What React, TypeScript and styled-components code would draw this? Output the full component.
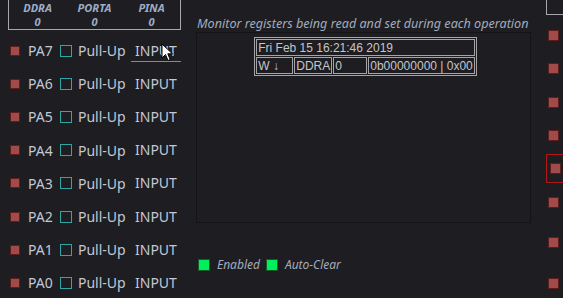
import React from 'react';
import styled, { createGlobalStyle } from 'styled-components';

const GlobalStyle = createGlobalStyle`
  html, body {
    margin: 0;
    padding: 0;
    background: #1d1d22;
    overflow: hidden;
  }
  body {
    font-family: 'Noto Sans', 'DejaVu Sans', sans-serif;
  }
`;

const pins = ['PA7', 'PA6', 'PA5', 'PA4', 'PA3', 'PA2', 'PA1', 'PA0'];
const rightPins = [
  { top: 30, selected: false },
  { top: 63, selected: false },
  { top: 97, selected: false },
  { top: 130, selected: false },
  { top: 163, selected: true },
  { top: 197, selected: false },
  { top: 237, selected: false },
  { top: 278, selected: false },
];

const App = () => {
  return (
    <Page>
      <GlobalStyle />
      <Left>
        <RegisterBox>
          {['DDRA', 'PORTA', 'PINA'].map((name) => (
            <RegisterCell key={name}>
              <span>{name}</span>
              <span>0</span>
            </RegisterCell>
          ))}
        </RegisterBox>
        <PinList>
          {pins.map((pin, i) => (
            <PinRow key={pin}>
              <Led />
              <PinName>{pin}</PinName>
              <Check />
              <PullUp>Pull-Up</PullUp>
              <Mode $focused={i === 0}>INPUT</Mode>
              {i === 0 && (
                <Cursor viewBox="0 0 12 19" width="12" height="19">
                  <path
                    d="M1 1 L1 15 L4.5 11.5 L7 17.5 L9.2 16.6 L6.8 10.8 L11.5 10.8 Z"
                    fill="#ffffff"
                    stroke="#000000"
                    strokeWidth="1"
                    strokeLinejoin="round"
                  />
                </Cursor>
              )}
            </PinRow>
          ))}
        </PinList>
      </Left>
      <Middle>
        <Caption>Monitor registers being read and set during each operation</Caption>
        <Monitor>
          <Log>
            <tbody>
              <tr>
                <td colSpan={4}>Fri Feb 15 16:21:46 2019</td>
              </tr>
              <tr>
                <LogCell $w={37}>W ↓</LogCell>
                <LogCell $w={37}>DDRA</LogCell>
                <LogCell $w={34}>0</LogCell>
                <LogCell>0b00000000 | 0x00</LogCell>
              </tr>
            </tbody>
          </Log>
        </Monitor>
        <Legend>
          <GreenBox />
          <LegendText>Enabled</LegendText>
          <GreenBox />
          <LegendText>Auto-Clear</LegendText>
        </Legend>
      </Middle>
      <Right>
        <RightBox />
        {rightPins.map((p) => (
          <RightLed key={p.top} style={{ top: p.top }} $selected={p.selected} />
        ))}
        <SelectedFrame />
      </Right>
    </Page>
  );
};

const Page = styled.div`
  display: flex;
  flex-direction: row;
  width: 563px;
  height: 298px;
  overflow: hidden;
`;

const Left = styled.div`
  display: flex;
  flex-direction: column;
  width: 196px;
  padding-left: 8px;
  box-sizing: border-box;
`;

const RegisterBox = styled.div`
  display: grid;
  grid-template-columns: repeat(3, 1fr);
  width: 173px;
  height: 31px;
  box-sizing: border-box;
  border: 1px solid #a8a8ac;
  border-top: none;
`;

const RegisterCell = styled.div`
  display: flex;
  flex-direction: column;
  align-items: center;
  font-size: 11px;
  line-height: 14px;
  font-weight: bold;
  font-style: italic;
  color: #9eadc6;
  padding-top: 1px;
`;

const PinList = styled.div`
  display: flex;
  flex-direction: column;
  margin-top: 4px;
`;

const PinRow = styled.div`
  position: relative;
  display: flex;
  flex-direction: row;
  align-items: center;
  height: 33.2px;
`;

const Led = styled.div`
  width: 10px;
  height: 10px;
  box-sizing: border-box;
  margin-left: 2px;
  background: #a14a4a;
  border: 1px solid #5a1e1e;
`;

const PinName = styled.span`
  margin-left: 8px;
  width: 32px;
  font-size: 14px;
  color: #c3c8d2;
`;

const Check = styled.div`
  width: 12px;
  height: 12px;
  box-sizing: border-box;
  border: 1px solid #2fa6a6;
`;

const PullUp = styled.span`
  margin-left: 6px;
  width: 53px;
  font-size: 14px;
  color: #c3c8d2;
`;

const Mode = styled.div<{ $focused?: boolean }>`
  width: 50px;
  box-sizing: border-box;
  padding-left: 4px;
  font-size: 14px;
  line-height: 20px;
  color: #c3c8d2;
  border-bottom: 1px solid ${(p) => (p.$focused ? '#2fb3a0' : 'transparent')};
  margin-top: 1px;
`;

const Cursor = styled.svg`
  position: absolute;
  left: 153px;
  top: 9px;
`;

const Middle = styled.div`
  display: flex;
  flex-direction: column;
  width: 335px;
`;

const Caption = styled.div`
  margin-top: 15px;
  padding-left: 1px;
  font-size: 12.6px;
  line-height: 17px;
  font-style: italic;
  color: #a3acbd;
  white-space: nowrap;
`;

const Monitor = styled.div`
  display: flex;
  justify-content: center;
  height: 191px;
  box-sizing: border-box;
  border: 1px solid #141417;
  padding: 4px 0 0 4px;
`;

const Log = styled.table`
  align-self: flex-start;
  border: 1px solid #a4a4a4;
  border-spacing: 1px;
  font-family: 'Liberation Sans', Arial, sans-serif;
  font-size: 12px;
  color: #c6c6c6;
  td {
    border: 1px solid #a4a4a4;
    padding: 0 1px;
    height: 15px;
    line-height: 14px;
    white-space: nowrap;
  }
`;

const LogCell = styled.td<{ $w?: number }>`
  width: ${(p) => (p.$w ? `${p.$w - 4}px` : 'auto')};
`;

const Legend = styled.div`
  display: flex;
  flex-direction: row;
  align-items: center;
  margin-top: 33px;
  padding-left: 2px;
`;

const GreenBox = styled.div`
  width: 12px;
  height: 12px;
  box-sizing: border-box;
  background: #00f05c;
  border: 1px solid #1a5a2a;
`;

const LegendText = styled.span`
  margin: 0 6px 0 7px;
  font-size: 12px;
  font-style: italic;
  color: #a3acbd;
`;

const Right = styled.div`
  position: relative;
  flex: 1;
`;

const RightBox = styled.div`
  margin-left: 15px;
  height: 14px;
  border-left: 1px solid #a8a8ac;
  border-bottom: 1px solid #a8a8ac;
`;

const RightLed = styled.div<{ $selected?: boolean }>`
  position: absolute;
  left: ${(p) => (p.$selected ? 19 : 17)}px;
  width: 11px;
  height: 11px;
  box-sizing: border-box;
  background: #a14a4a;
  border: 1px solid #5a1e1e;
`;

const SelectedFrame = styled.div`
  position: absolute;
  left: 15px;
  top: 154px;
  width: 20px;
  height: 29px;
  box-sizing: border-box;
  border: 1px solid #b01818;
`;

export default App;
